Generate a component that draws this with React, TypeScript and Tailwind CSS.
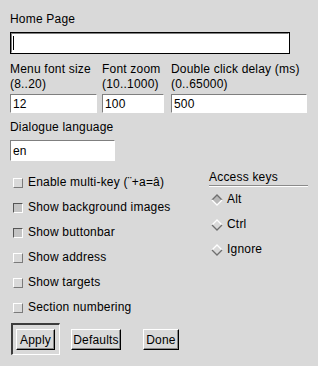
import React from "react";

const sunken = "border border-t-[#7f7f7f] border-l-[#7f7f7f] border-b-white border-r-white";

function Entry({ value, width, height }: { value: string; width: string; height: string }) {
  return (
    <div className={`${width} ${height} ${sunken} flex items-center bg-white pl-[2px] leading-none`}>
      {value}
    </div>
  );
}

function CheckBox({ checked, label }: { checked: boolean; label: string }) {
  return (
    <div className="flex h-[25px] items-center">
      <span
        className={
          checked
            ? "ml-[3px] h-[10px] w-[10px] border border-t-[#555] border-l-[#555] border-b-white border-r-white bg-[#c4c4c4]"
            : "ml-[3px] h-[10px] w-[10px] border border-t-white border-l-white border-b-[#7a7a7a] border-r-[#7a7a7a] bg-[#d9d9d9]"
        }
      />
      <span className="ml-[5px] leading-[15px]">{label}</span>
    </div>
  );
}

function Radio({ selected, label }: { selected: boolean; label: string }) {
  const top = selected ? "#6f6f6f" : "#ffffff";
  const bottom = selected ? "#ffffff" : "#6f6f6f";
  return (
    <div className="flex h-[25px] items-center">
      <svg width="12" height="12" viewBox="0 0 12 12" className="ml-[2px]">
        <polygon points="6,1 11,6 6,11 1,6" fill={selected ? "#b8b8b8" : "#d9d9d9"} />
        <polyline points="1,6 6,1 11,6" fill="none" stroke={top} strokeWidth="1.3" />
        <polyline points="1,6 6,11 11,6" fill="none" stroke={bottom} strokeWidth="1.3" />
      </svg>
      <span className="ml-[4px] leading-[15px]">{label}</span>
    </div>
  );
}

function Button({ label, width }: { label: string; width: string }) {
  return (
    <div
      className={`${width} flex h-[21px] items-center justify-center border border-t-white border-l-white border-b-black border-r-black bg-[#d9d9d9] shadow-[inset_-1px_-1px_0_#8a8a8a] leading-none`}
    >
      {label}
    </div>
  );
}

export default function App() {
  return (
    <div className="h-[366px] w-[318px] overflow-hidden bg-[#d9d9d9] px-[10px] pt-[12px] font-['Liberation_Sans',Arial,sans-serif] text-[12px] tracking-[0.2px] text-black">
      <div className="leading-[15px]">Home Page</div>
      <div className="mt-[5px] h-[22px] w-[280px] border border-black">
        <div className="flex h-full items-center border border-t-[#7f7f7f] border-l-[#7f7f7f] border-b-white border-r-white bg-white pl-[1px]">
          <span className="h-[14px] w-[1px] bg-black" />
        </div>
      </div>

      <div className="mt-[8px] flex">
        <div className="w-[87px]">
          <div className="leading-[15px] whitespace-nowrap">Menu font size</div>
          <div className="leading-[15px]">(8..20)</div>
          <div className="mt-[2px]">
            <Entry value="12" width="w-[87px]" height="h-[19px]" />
          </div>
        </div>
        <div className="ml-[5px] w-[62px]">
          <div className="leading-[15px] whitespace-nowrap">Font zoom</div>
          <div className="leading-[15px]">(10..1000)</div>
          <div className="mt-[2px]">
            <Entry value="100" width="w-[62px]" height="h-[19px]" />
          </div>
        </div>
        <div className="ml-[7px] w-[136px]">
          <div className="leading-[15px] whitespace-nowrap">Double click delay (ms)</div>
          <div className="leading-[15px]">(0..65000)</div>
          <div className="mt-[2px]">
            <Entry value="500" width="w-[136px]" height="h-[19px]" />
          </div>
        </div>
      </div>

      <div className="mt-[7px] leading-[15px]">Dialogue language</div>
      <div className="mt-[5px]">
        <Entry value="en" width="w-[105px]" height="h-[21px]" />
      </div>

      <div className="mt-[9px] flex">
        <div className="w-[199px]">
          <CheckBox checked={false} label="Enable multi-key (¨+a=â)" />
          <CheckBox checked={true} label="Show background images" />
          <CheckBox checked={true} label="Show buttonbar" />
          <CheckBox checked={false} label="Show address" />
          <CheckBox checked={false} label="Show targets" />
          <CheckBox checked={false} label="Section numbering" />
        </div>
        <div className="w-[99px]">
          <div className="h-[16px] border-b border-[#8a8a8a] leading-[15px]">Access keys</div>
          <div className="h-px bg-white" />
          <Radio selected={true} label="Alt" />
          <Radio selected={false} label="Ctrl" />
          <Radio selected={false} label="Ignore" />
        </div>
      </div>

      <div className="mt-[3px] flex items-start">
        <div className="ml-[1px] h-[32px] w-[49px] border-t-2 border-l-2 border-b border-r border-t-[#3c3c3c] border-l-[#3c3c3c] border-b-white border-r-white pl-[3px] pt-[4px]">
          <Button label="Apply" width="w-[39px]" />
        </div>
        <div className="ml-[11px] mt-[6px]">
          <Button label="Defaults" width="w-[50px]" />
        </div>
        <div className="ml-[22px] mt-[6px]">
          <Button label="Done" width="w-[36px]" />
        </div>
      </div>
    </div>
  );
}
